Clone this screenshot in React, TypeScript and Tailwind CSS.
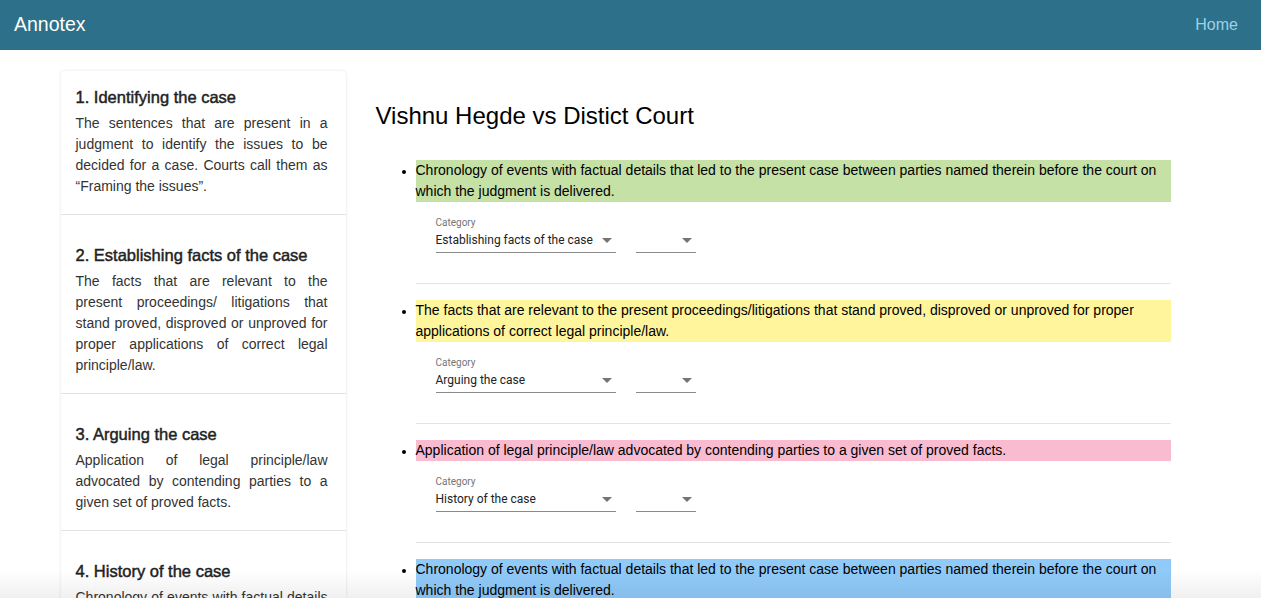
const guide = [
  {
    title: "1. Identifying the case",
    body: "The sentences that are present in a judgment to identify the issues to be decided for a case. Courts call them as “Framing the issues”.",
  },
  {
    title: "2. Establishing facts of the case",
    body: "The facts that are relevant to the present proceedings/ litigations that stand proved, disproved or unproved for proper applications of correct legal principle/law.",
  },
  {
    title: "3. Arguing the case",
    body: "Application of legal principle/law advocated by contending parties to a given set of proved facts.",
  },
  {
    title: "4. History of the case",
    body: "Chronology of events with factual details that led to the present case between parties named therein before the court on which the judgment is delivered.",
  },
];

const sentences = [
  {
    text: "Chronology of events with factual details that led to the present case between parties named therein before the court on which the judgment is delivered.",
    bg: "bg-[#c5e1a5]",
    category: "Establishing facts of the case",
  },
  {
    text: "The facts that are relevant to the present proceedings/litigations that stand proved, disproved or unproved for proper applications of correct legal principle/law.",
    bg: "bg-[#fff59d]",
    category: "Arguing the case",
  },
  {
    text: "Application of legal principle/law advocated by contending parties to a given set of proved facts.",
    bg: "bg-[#f8bbd0]",
    category: "History of the case",
  },
  {
    text: "Chronology of events with factual details that led to the present case between parties named therein before the court on which the judgment is delivered.",
    bg: "bg-[#90caf9]",
    category: "Identifying the case",
  },
];

function Caret() {
  return (
    <svg width="10" height="5" viewBox="0 0 10 5" className="shrink-0">
      <path d="M0 0 L10 0 L5 5 Z" fill="#757575" />
    </svg>
  );
}

function CategorySelect({ value }: { value: string }) {
  return (
    <div className="ml-5 mt-[15px] flex items-end gap-5 font-['Roboto',sans-serif]">
      <div className="w-[180px]">
        <div className="text-[10px] leading-[12px] text-[#757575]">Category</div>
        <div className="mt-[3px] flex h-[21px] items-center justify-between border-b border-[#8a8a8a] pb-[3px] pr-[4px] text-[12px] text-[#222]">
          <span>{value}</span>
          <Caret />
        </div>
      </div>
      <div className="flex h-[21px] w-[60px] items-center justify-end border-b border-[#8a8a8a] pb-[3px] pr-[4px]">
        <Caret />
      </div>
    </div>
  );
}

export default function App() {
  return (
    <div className="min-h-screen bg-white font-['Liberation_Sans',Arial,sans-serif] text-[#212529]">
      {/* top bar */}
      <nav className="flex h-[50px] items-center justify-between bg-[#2c7089] px-[14px]">
        <span className="text-[19.5px] text-white">Annotex</span>
        <span className="pr-[9px] text-[16px] text-[#9fd0e8]">Home</span>
      </nav>

      <div className="mx-auto flex w-[1140px] pt-[21px]">
        {/* guide card */}
        <aside className="w-[285px] shrink-0 self-start rounded-[4px] bg-white shadow-[0_0_3px_rgba(0,0,0,0.12)]">
          {guide.map((g, i) => (
            <div
              key={g.title}
              className={`border-b border-[#e3e3e3] pb-[17px] pl-[15px] pr-[18px] ${i === 0 ? "pt-[16px]" : "pt-[30px]"}`}
            >
              <h3 className="text-[16.5px] leading-[20px] text-[#222] [-webkit-text-stroke:0.45px_#222]">{g.title}</h3>
              <p className="mt-[6px] text-justify text-[14px] leading-[21px] text-[#333]">{g.body}</p>
            </div>
          ))}
        </aside>

        {/* annotation area */}
        <main className="flex-1 px-[30px]">
          <h1 className="mt-[30px] text-[24px] leading-[30px] text-black">Vishnu Hegde vs Distict Court</h1>
          <ul className="mt-[29px] list-disc pl-[40px] text-[14px] leading-[21px] text-black">
            {sentences.map((s, i) => (
              <li key={i} className="mb-[16px] marker:text-[12px]">
                <div className={`${s.bg}`}>{s.text}</div>
                <CategorySelect value={s.category} />
                <div className="mt-[30px] border-b border-[#e3e3e3]" />
              </li>
            ))}
          </ul>
        </main>
      </div>

      {/* soft fade along the bottom edge */}
      <div className="pointer-events-none fixed inset-x-0 bottom-0 h-[28px] bg-gradient-to-b from-transparent to-black/[0.06]" />
    </div>
  );
}
